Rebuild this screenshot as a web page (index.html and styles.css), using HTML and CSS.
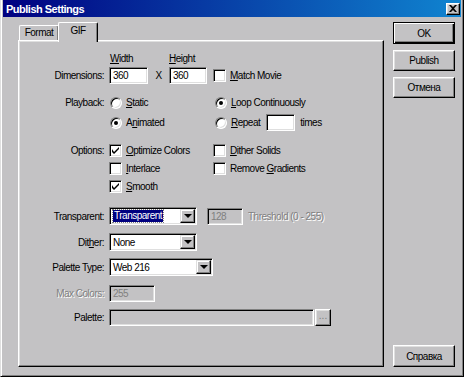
FILE: index.html
```html
<!DOCTYPE html>
<html lang="en">
<head>
    <meta charset="UTF-8">
    <meta name="viewport" content="width=device-width, initial-scale=1.0">
    <title>Publish Settings</title>
    <link rel="stylesheet" href="styles.css">
</head>
<body>
    <div class="window">
        <div class="title-bar">
            <span class="title">Publish Settings</span>
            <button class="close-btn" title="Close">
                <svg width="8" height="7" viewBox="0 0 8 7"><path d="M0 0h2l2 2 2-2h2L5 3.5 8 7H6L4 5 2 7H0l3-3.5z"/></svg>
            </button>
        </div>
        <div class="dialog-body">
            <div class="tabs-area">
                <div class="tabs">
                    <div class="tab">Format</div>
                    <div class="tab active">GIF</div>
                </div>
                <div class="panel">
                    <div class="row head-row">
                        <span class="label"></span>
                        <span class="head-w"><u>W</u>idth</span>
                        <span><u>H</u>eight</span>
                    </div>
                    <div class="row dims">
                        <label class="label">Dimensions:</label>
                        <div class="col2">
                            <input class="field size-w" type="text" value="360">
                            <span class="times-x">X</span>
                            <input class="field size-h" type="text" value="360">
                        </div>
                        <div class="item"><span class="check"></span><span><u>M</u>atch Movie</span></div>
                    </div>
                    <div class="row playback-1">
                        <label class="label">Playback:</label>
                        <div class="col2">
                            <div class="item radio-item"><span class="radio"></span><span><u>S</u>tatic</span></div>
                        </div>
                        <div class="item radio-item"><span class="radio on"></span><span><u>L</u>oop Continuously</span></div>
                    </div>
                    <div class="row playback-2">
                        <span class="label"></span>
                        <div class="col2">
                            <div class="item radio-item"><span class="radio on"></span><span>A<u>n</u>imated</span></div>
                        </div>
                        <div class="item radio-item"><span class="radio"></span><span><u>R</u>epeat</span></div>
                        <input class="field repeat" type="text" value="">
                        <span class="times-label">times</span>
                    </div>
                    <div class="row options-1">
                        <label class="label">Options:</label>
                        <div class="col2">
                            <div class="item"><span class="check on"><svg width="7" height="7" viewBox="0 0 7 7"><path d="M0 2v3l2 2 5-5V0L2 5z"/></svg></span><span><u>O</u>ptimize Colors</span></div>
                        </div>
                        <div class="item"><span class="check"></span><span><u>D</u>ither Solids</span></div>
                    </div>
                    <div class="row options-2">
                        <span class="label"></span>
                        <div class="col2">
                            <div class="item"><span class="check"></span><span><u>I</u>nterlace</span></div>
                        </div>
                        <div class="item"><span class="check"></span><span>Remove <u>G</u>radients</span></div>
                    </div>
                    <div class="row options-3">
                        <span class="label"></span>
                        <div class="col2">
                            <div class="item"><span class="check on"><svg width="7" height="7" viewBox="0 0 7 7"><path d="M0 2v3l2 2 5-5V0L2 5z"/></svg></span><span><u>S</u>mooth</span></div>
                        </div>
                    </div>
                    <div class="row transparent">
                        <label class="label">Transparent:</label>
                        <div class="combo combo-trans">
                            <span class="combo-value"><span class="selected">Transparent</span></span>
                            <span class="combo-arrow"></span>
                        </div>
                        <input class="field threshold disabled" type="text" value="128" disabled>
                        <span class="muted">Threshold (0 - 255)</span>
                    </div>
                    <div class="row dither">
                        <label class="label">Dit<u>h</u>er:</label>
                        <div class="combo combo-dither">
                            <span class="combo-value">None</span>
                            <span class="combo-arrow"></span>
                        </div>
                    </div>
                    <div class="row palette-type">
                        <label class="label">Palette Type:</label>
                        <div class="combo combo-palette">
                            <span class="combo-value">Web 216</span>
                            <span class="combo-arrow"></span>
                        </div>
                    </div>
                    <div class="row max-colors">
                        <label class="label muted">Max Colors:</label>
                        <input class="field max disabled" type="text" value="255" disabled>
                    </div>
                    <div class="row palette">
                        <label class="label">Palette:</label>
                        <input class="field palette-path disabled" type="text" value="" disabled>
                        <button class="browse-btn">...</button>
                    </div>
                </div>
            </div>
            <div class="side-buttons">
                <button class="button default">OK</button>
                <button class="button">Publish</button>
                <button class="button">Отмена</button>
                <button class="button help">Справка</button>
            </div>
        </div>
    </div>
</body>
</html>
```

FILE: styles.css
```css
body {
    margin: 0;
    font-family: "Liberation Sans", Arial, sans-serif;
    font-size: 10px;
    letter-spacing: -0.5px;
    color: #000;
    background-color: #c3c2c4;
}

.window {
    width: 464px;
    height: 377px;
    box-sizing: border-box;
    padding: 0 2px 2px 2px;
    border-left: 1px solid #dfdfdf;
    border-right: 1px solid #000;
    border-bottom: 1px solid #000;
    box-shadow: inset 1px 0 #fff, inset -1px -1px #808080;
    background-color: #c3c2c4;
    display: flex;
    flex-direction: column;
}

.title-bar {
    height: 17px;
    flex-shrink: 0;
    display: flex;
    align-items: center;
    justify-content: space-between;
    padding: 0 1px 0 3px;
    background: linear-gradient(to right, #000080, #1084d0);
}

.title {
    color: #fff;
    font-weight: bold;
    font-size: 11px;
}

.close-btn {
    width: 14px;
    height: 12px;
    padding: 0;
    display: flex;
    align-items: center;
    justify-content: center;
    border: 1px solid;
    border-color: #fff #000 #000 #fff;
    box-shadow: inset -1px -1px #808080, inset 1px 1px #dfdfdf;
    background-color: #c3c2c4;
}

.dialog-body {
    flex: 1;
    display: flex;
    padding: 5px 6px 7px 15px;
}

.tabs-area {
    width: 366px;
    display: flex;
    flex-direction: column;
}

.tabs {
    height: 18px;
    display: flex;
    align-items: flex-end;
    padding-left: 1px;
}

.tab {
    position: relative;
    width: 40px;
    height: 15px;
    box-sizing: border-box;
    text-align: center;
    line-height: 13px;
    border: 1px solid;
    border-color: #fff #000 transparent #fff;
    border-bottom: none;
    border-radius: 2px 2px 0 0;
    box-shadow: inset -1px 0 #808080;
    background-color: #c3c2c4;
}

.tab.active {
    z-index: 2;
    height: 20px;
    margin: 0 0 -2px -1px;
    line-height: 15px;
}

.panel {
    flex: 1;
    position: relative;
    border: 1px solid;
    border-color: #fff #000 #000 #fff;
    box-shadow: inset -1px -1px #808080, inset 1px 1px #dfdfdf;
}

.row {
    display: flex;
    align-items: center;
}

.label {
    width: 85px;
    margin-right: 5px;
    text-align: right;
    flex-shrink: 0;
}

.col2 {
    width: 104px;
    display: flex;
    align-items: center;
    flex-shrink: 0;
}

.head-row { margin-top: 11px; height: 12px; }
.dims { margin-top: 3px; height: 17px; }
.playback-1 { margin-top: 12px; height: 13px; }
.playback-2 { margin-top: 5px; height: 17px; }
.options-1 { margin-top: 13px; height: 13px; }
.options-2 { margin-top: 5px; height: 13px; }
.options-3 { margin-top: 5px; height: 13px; }
.transparent { margin-top: 14px; height: 18px; }
.dither { margin-top: 8px; height: 18px; }
.palette-type { margin-top: 7px; height: 18px; }
.max-colors { margin-top: 9px; height: 17px; }
.palette { margin-top: 7px; height: 17px; }

.head-w {
    width: 59px;
    padding-left: 1px;
}

.field {
    height: 17px;
    box-sizing: border-box;
    margin: 0;
    padding: 0 3px;
    font: inherit;
    letter-spacing: inherit;
    color: #000;
    border: 1px solid;
    border-color: #808080 #fff #fff #808080;
    box-shadow: inset 1px 1px #000, inset -1px -1px #dfdfdf;
    background-color: #fff;
    outline: none;
}

.field.disabled {
    color: #808080;
    background-color: #c3c2c4;
}

.size-w { width: 39px; }
.size-h { width: 38px; }
.repeat { width: 29px; margin-left: 6px; }
.threshold { width: 36px; margin-left: 10px; }
.max { width: 46px; }
.palette-path { width: 205px; }

.times-x {
    width: 21px;
    text-align: center;
}

.times-label {
    margin-left: 5px;
}

.item {
    display: flex;
    align-items: center;
    white-space: nowrap;
}

.radio-item {
    margin-left: 1px;
}

.col2 + .radio-item {
    margin-left: 2px;
}

.check {
    width: 13px;
    height: 13px;
    box-sizing: border-box;
    margin-right: 4px;
    display: flex;
    align-items: center;
    justify-content: center;
    border: 1px solid;
    border-color: #808080 #fff #fff #808080;
    box-shadow: inset 1px 1px #000, inset -1px -1px #dfdfdf;
    background-color: #fff;
}

.radio {
    position: relative;
    width: 12px;
    height: 12px;
    box-sizing: border-box;
    margin-right: 4px;
    border-radius: 50%;
    border: 1px solid;
    border-color: #808080 #fff #fff #808080;
    box-shadow: inset 1px 1px #000, inset -1px -1px #dfdfdf;
    background-color: #fff;
}

.radio.on::after {
    content: "";
    position: absolute;
    left: 3px;
    top: 3px;
    width: 4px;
    height: 4px;
    border-radius: 50%;
    background-color: #000;
}

.combo {
    height: 18px;
    box-sizing: border-box;
    display: flex;
    align-items: center;
    justify-content: space-between;
    padding: 0 1px 0 2px;
    border: 1px solid;
    border-color: #808080 #fff #fff #808080;
    box-shadow: inset 1px 1px #000, inset -1px -1px #dfdfdf;
    background-color: #fff;
}

.combo-trans { width: 88px; }
.combo-dither { width: 88px; }
.combo-palette { width: 104px; }

.combo-value {
    padding-left: 1px;
}

.selected {
    display: inline-block;
    padding: 0 1px;
    line-height: 12px;
    color: #fff;
    background-color: #000080;
    outline: 1px dotted #808080;
}

.combo-arrow {
    width: 15px;
    height: 14px;
    box-sizing: border-box;
    display: flex;
    align-items: center;
    justify-content: center;
    border: 1px solid;
    border-color: #dfdfdf #000 #000 #dfdfdf;
    box-shadow: inset -1px -1px #808080, inset 1px 1px #fff;
    background-color: #c3c2c4;
}

.combo-arrow::after {
    content: "";
    border-left: 4px solid transparent;
    border-right: 4px solid transparent;
    border-top: 4px solid #000;
}

.muted {
    color: #808080;
    text-shadow: 1px 1px #fff;
}

.transparent .muted {
    margin-left: 5px;
}

.browse-btn {
    width: 16px;
    height: 17px;
    margin: 0 0 0 1px;
    padding: 0 0 3px 0;
    font: inherit;
    line-height: 10px;
    color: #808080;
    border: 1px solid;
    border-color: #fff #000 #000 #fff;
    box-shadow: inset -1px -1px #808080, inset 1px 1px #dfdfdf;
    background-color: #c3c2c4;
}

.side-buttons {
    width: 62px;
    margin-left: 9px;
    display: flex;
    flex-direction: column;
}

.button {
    height: 21px;
    margin: 0 0 6px 0;
    padding: 0;
    font: inherit;
    letter-spacing: inherit;
    color: #000;
    border: 1px solid;
    border-color: #fff #000 #000 #fff;
    box-shadow: inset -1px -1px #808080, inset 1px 1px #dfdfdf;
    background-color: #c3c2c4;
}

.button.default {
    height: 22px;
    border-color: #000;
    box-shadow: inset 1px 1px #fff, inset -1px -1px #000, inset -2px -2px #808080;
}

.button.help {
    height: 22px;
    margin: auto 0 0 0;
}
```
